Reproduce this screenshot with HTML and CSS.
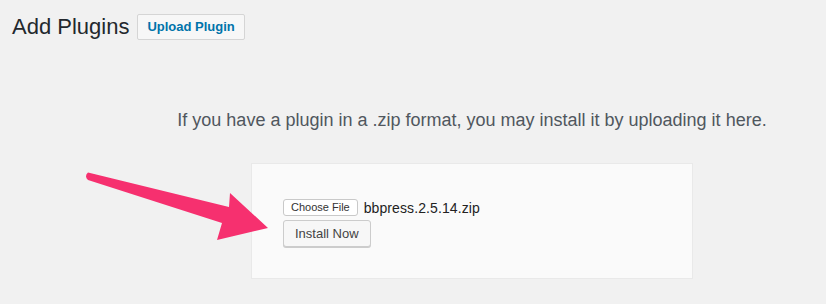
FILE: index.html
```html
<!DOCTYPE html>
<html lang="en">
<head>
  <meta charset="UTF-8">
  <title>Add Plugins</title>
  <link rel="stylesheet" href="styles.css">
</head>
<body>

  <div class="wrap">
    <div class="title-row">
      <h1>Add Plugins</h1>
      <a class="title-action" href="#">Upload Plugin</a>
    </div>

    <div class="upload">
      <p class="help">If you have a plugin in a .zip format, you may install it by uploading it here.</p>

      <form class="upload-form">
        <div class="file-row">
          <button type="button" class="file-btn">Choose File</button>
          <span class="file-name">bbpress.2.5.14.zip</span>
        </div>
        <button type="button" class="install-btn">Install Now</button>
      </form>
    </div>
  </div>

  <!-- annotation arrow over the page -->
  <svg class="arrow" width="826" height="304" viewBox="0 0 826 304">
    <path d="M88 172.5 L229 207 L230 193 L268 228 L217 240 L222 223 L88 180 Q84 176 88 172.5 Z" fill="#f6306f"/>
  </svg>

</body>
</html>
```

FILE: styles.css
```css
* {
  margin: 0;
  padding: 0;
  box-sizing: border-box;
}

body {
  background: #f1f1f1;
  font-family: 'Liberation Sans', Arial, sans-serif;
  color: #23282d;
  width: 826px;
  height: 304px;
  overflow: hidden;
  position: relative;
}

.wrap {
  padding: 14px 12px 0;
}

.title-row {
  display: flex;
  align-items: center;
  gap: 8px;
}

h1 {
  font-size: 22px;
  font-weight: 400;
  color: #23282d;
  line-height: 26px;
}

.title-action {
  display: inline-block;
  height: 26px;
  line-height: 24px;
  padding: 0 9px;
  font-size: 13px;
  font-weight: 600;
  color: #0073aa;
  text-decoration: none;
  background: #f7f7f7;
  border: 1px solid #d5d5d5;
  border-radius: 2px;
}

.upload {
  display: flex;
  flex-direction: column;
  align-items: center;
  padding-left: 118px;
}

.help {
  margin-top: 70px;
  font-size: 18px;
  color: #50575e;
  line-height: 20px;
}

.upload-form {
  margin-top: 33px;
  width: 442px;
  height: 116px;
  background: #fafafa;
  border: 1px solid #e9e9e9;
  padding: 35px 0 0 31px;
}

.file-row {
  display: flex;
  align-items: center;
  gap: 6px;
}

.file-btn {
  font-family: 'Liberation Sans', Arial, sans-serif;
  font-size: 11px;
  color: #333;
  background: #fff;
  border: 1px solid #c9c9c9;
  border-radius: 3px;
  padding: 0 7px;
  height: 17px;
  line-height: 15px;
}

.file-name {
  font-size: 14px;
  color: #222;
  letter-spacing: 0.1px;
}

.install-btn {
  margin-top: 4px;
  font-family: 'Liberation Sans', Arial, sans-serif;
  font-size: 13px;
  color: #444;
  background: #f7f7f7;
  border: 1px solid #ccc;
  border-radius: 3px;
  box-shadow: 0 1px 0 #ccc;
  height: 27px;
  padding: 0 11px;
}

.arrow {
  position: absolute;
  left: 0;
  top: 0;
  pointer-events: none;
}
```
